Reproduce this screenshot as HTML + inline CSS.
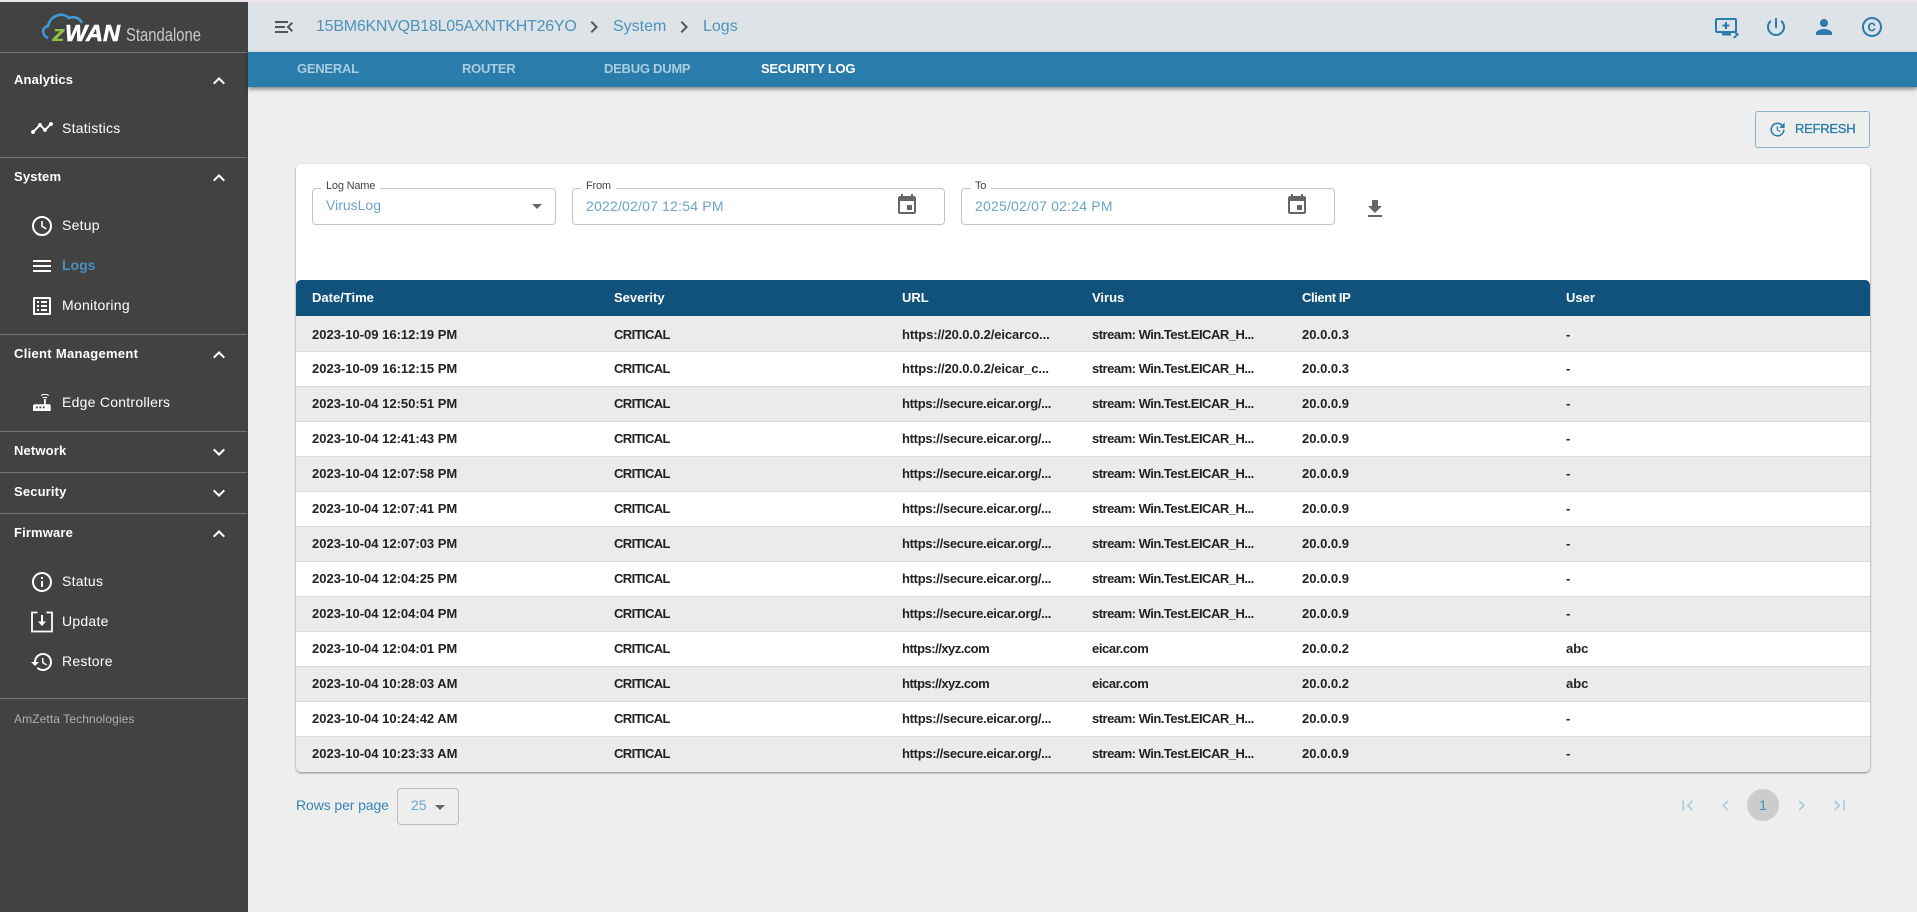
<!DOCTYPE html>
<html lang="en"><head><meta charset="utf-8"><title>zWAN Standalone</title>
<style>
html,body{margin:0;padding:0;width:1917px;height:912px;overflow:hidden;background:#eee;font-family:"Liberation Sans",Arial,sans-serif}
*{box-sizing:border-box}
.a{position:absolute;white-space:nowrap}
svg{position:absolute;display:block;overflow:visible}
#top{position:absolute;left:0;top:0;width:1917px;height:2px;background:#ece4ea}
#side{position:absolute;left:0;top:2px;width:248px;height:910px;background:#424242}
.sep{position:absolute;left:0;width:247px;height:1px;background:#757575}
.h{position:absolute;left:14px;font-size:13px;font-weight:bold;color:#fff;line-height:16px;letter-spacing:.15px;white-space:nowrap}
.i{position:absolute;left:62px;font-size:14px;color:#fff;line-height:18px;letter-spacing:.25px;white-space:nowrap}
#hdr{position:absolute;left:248px;top:2px;width:1669px;height:50px;background:#dee3e7}
#tabs{position:absolute;left:248px;top:52px;width:1669px;height:35px;background:#2a7cab;box-shadow:0 2px 4px rgba(0,0,0,.45)}
.t{position:absolute;top:61px;font-size:13px;font-weight:bold;line-height:16px;color:#a9cde0;letter-spacing:-.25px;white-space:nowrap}
.bc{position:absolute;top:17px;font-size:16px;line-height:20px;color:#4c92bb;white-space:nowrap}
#btn{position:absolute;left:1755px;top:111px;width:115px;height:37px;border:1px solid #86b3cd;border-radius:3px}
#card{position:absolute;left:296px;top:164px;width:1574px;height:608px;background:#fff;border-radius:5px;box-shadow:0 1px 2px rgba(0,0,0,.45);overflow:hidden}
.f{position:absolute;top:188px;height:37px;border:1px solid #c4c4c4;border-radius:4px;background:#fff}
.l{position:absolute;top:180px;height:13px;background:#fff;padding:0 5px;font-size:11px;line-height:13px;color:#444;letter-spacing:-.2px;white-space:nowrap}
.v{position:absolute;font-size:14px;line-height:18px;color:#6aa5c9;white-space:nowrap}
.d{letter-spacing:.2px}
#th{position:absolute;left:296px;top:280px;width:1574px;height:36px;background:#10527c;border-radius:5px 5px 0 0}
.tx{position:absolute;top:0;line-height:36px;font-size:13px;font-weight:bold;color:#fff;white-space:nowrap}
.r{position:absolute;left:296px;width:1574px;height:35px;border-bottom:1px solid #dcdcdc;background:#fff;overflow:hidden}
.r.g{background:#ebebeb}
.r span{position:absolute;top:-1px;line-height:35px;font-size:13px;font-weight:bold;color:#222;white-space:nowrap}
.c1{left:16px}.c2{left:318px;letter-spacing:-.6px}.c3{left:606px;letter-spacing:-.3px}.c4{left:796px;letter-spacing:-.5px}.c5{left:1006px}.c6{left:1270px}
.r span.x{letter-spacing:-.5px}.r span.y{letter-spacing:-.4px}.r span.z{letter-spacing:-.1px}
</style></head><body>
<div id="top"></div>
<div id="side"></div>

<svg style="left:40px;top:10px" width="170" height="36" viewBox="0 0 170 36">
<path d="M8 28C1 25 2 17 8 16 C10 6 22 1 29 8 C34 6 40 8 42 13" fill="none" stroke="#3c9ad6" stroke-width="2.6"/>
<text x="12" y="31" font-family="Liberation Sans" font-size="22" font-weight="bold" font-style="italic" fill="#8dc044" textLength="13" lengthAdjust="spacingAndGlyphs">z</text>
<text x="25" y="31" font-family="Liberation Sans" font-size="23" font-weight="bold" font-style="italic" fill="#fff" stroke="#fff" stroke-width=".6" textLength="55" lengthAdjust="spacingAndGlyphs">WAN</text>
<text x="86" y="31" font-family="Liberation Sans" font-size="18" fill="#c8c8c8" textLength="75" lengthAdjust="spacingAndGlyphs">Standalone</text>
</svg>

<div class="sep" style="top:52px"></div>
<div class="h" style="top:72px">Analytics</div>
<svg style="left:207px;top:69px" width="24" height="24" viewBox="0 0 24 24" fill="#fff"><path d="M12 8l-6 6 1.41 1.41L12 10.83l4.59 4.58L18 14z"/></svg>
<svg style="left:30px;top:116px" width="24" height="24" viewBox="0 0 24 24" fill="#fff"><path d="M23 8c0 1.1-.9 2-2 2-.18 0-.35-.02-.51-.07l-3.56 3.55c.05.16.07.34.07.52 0 1.1-.9 2-2 2s-2-.9-2-2c0-.18.02-.36.07-.52l-2.55-2.55c-.16.05-.34.07-.52.07s-.36-.02-.52-.07l-4.55 4.56c.05.16.07.33.07.51 0 1.1-.9 2-2 2s-2-.9-2-2 .9-2 2-2c.18 0 .35.02.51.07l4.56-4.55C8.02 9.36 8 9.18 8 9c0-1.1.9-2 2-2s2 .9 2 2c0 .18-.02.36-.07.52l2.55 2.55c.16-.05.34-.07.52-.07s.36.02.52.07l3.55-3.56C19.02 8.35 19 8.18 19 8c0-1.1.9-2 2-2s2 .9 2 2z"/></svg>
<div class="i" style="top:119px">Statistics</div>
<div class="sep" style="top:157px"></div>
<div class="h" style="top:169px">System</div>
<svg style="left:207px;top:166px" width="24" height="24" viewBox="0 0 24 24" fill="#fff"><path d="M12 8l-6 6 1.41 1.41L12 10.83l4.59 4.58L18 14z"/></svg>
<svg style="left:30px;top:214px" width="24" height="24" viewBox="0 0 24 24" fill="none" stroke="#fff" stroke-width="2"><circle cx="12" cy="12" r="9"/><path d="M12 7v5.3l4.2 2.5" stroke-width="1.6"/></svg>
<div class="i" style="top:216px">Setup</div>
<svg style="left:30px;top:254px" width="24" height="24" viewBox="0 0 24 24" fill="#fff"><path d="M3 18h18v-2H3v2zm0-5h18v-2H3v2zm0-7v2h18V6H3z"/></svg>
<div class="i" style="top:256px;color:#4a90bf;font-weight:bold;letter-spacing:0">Logs</div>
<svg style="left:30px;top:294px" width="24" height="24" viewBox="0 0 24 24" fill="#fff"><path d="M19 5v14H5V5h14m1.1-2H3.9c-.5 0-.9.4-.9.9v16.2c0 .4.4.9.9.9h16.2c.4 0 .9-.5.9-.9V3.9c0-.5-.5-.9-.9-.9zM11 7h6v2h-6V7zm0 4h6v2h-6v-2zm0 4h6v2h-6zM7 7h2v2H7zm0 4h2v2H7zm0 4h2v2H7z"/></svg>
<div class="i" style="top:296px">Monitoring</div>
<div class="sep" style="top:334px"></div>
<div class="h" style="top:346px;letter-spacing:.3px">Client Management</div>
<svg style="left:207px;top:343px" width="24" height="24" viewBox="0 0 24 24" fill="#fff"><path d="M12 8l-6 6 1.41 1.41L12 10.83l4.59 4.58L18 14z"/></svg>
<svg style="left:30px;top:391px" width="24" height="24" viewBox="0 0 24 24"><path d="M3 20v-5c0-1 .8-1.700 1.700-1.700H19c1 0 1.700.8 1.700 1.700v5z" fill="#fff"/><rect x="14" y="8" width="1.800" height="6" fill="#fff"/><rect x="6" y="15.500" width="1.800" height="1.800" fill="#424242"/><rect x="9.400" y="15.500" width="1.800" height="1.800" fill="#424242"/><rect x="12.800" y="15.500" width="1.800" height="1.800" fill="#424242"/><path d="M11 4.500c2-1.500 5.800-1.500 7.800 0M12.700 7c1.200-.8 3.200-.8 4.400 0" fill="none" stroke="#fff" stroke-width="1.100"/></svg>
<div class="i" style="top:393px">Edge Controllers</div>
<div class="sep" style="top:431px"></div>
<div class="h" style="top:443px">Network</div>
<svg style="left:207px;top:440px" width="24" height="24" viewBox="0 0 24 24" fill="#fff"><path d="M16.59 8.59L12 13.17 7.41 8.59 6 10l6 6 6-6z"/></svg>
<div class="sep" style="top:472px"></div>
<div class="h" style="top:484px">Security</div>
<svg style="left:207px;top:481px" width="24" height="24" viewBox="0 0 24 24" fill="#fff"><path d="M16.59 8.59L12 13.17 7.41 8.59 6 10l6 6 6-6z"/></svg>
<div class="sep" style="top:513px"></div>
<div class="h" style="top:525px">Firmware</div>
<svg style="left:207px;top:522px" width="24" height="24" viewBox="0 0 24 24" fill="#fff"><path d="M12 8l-6 6 1.41 1.41L12 10.83l4.59 4.58L18 14z"/></svg>
<svg style="left:30px;top:570px" width="24" height="24" viewBox="0 0 24 24" fill="#fff"><path d="M11 7h2v2h-2zm0 4h2v6h-2zm1-9C6.480 2 2 6.480 2 12s4.480 10 10 10 10-4.480 10-10S17.520 2 12 2zm0 18c-4.410 0-8-3.590-8-8s3.590-8 8-8 8 3.590 8 8-3.590 8-8 8z"/></svg>
<div class="i" style="top:572px">Status</div>
<svg style="left:30px;top:610px" width="24" height="24" viewBox="0 0 24 24" fill="none" stroke="#fff" stroke-width="1.800"><path d="M7.500 2.500H2v19h20v-19h-5.500"/><path d="M12 5v9" stroke-width="2"/><path d="M8 11.500h8L12 16z" fill="#fff" stroke="none"/></svg>
<div class="i" style="top:612px">Update</div>
<svg style="left:30px;top:650px" width="24" height="24" viewBox="0 0 24 24" fill="#fff"><path d="M13 3c-4.970 0-9 4.030-9 9H1l3.890 3.890.07.14L9 12H6c0-3.870 3.130-7 7-7s7 3.130 7 7-3.130 7-7 7c-1.930 0-3.680-.79-4.940-2.060l-1.420 1.420C8.270 19.990 10.510 21 13 21c4.970 0 9-4.030 9-9s-4.030-9-9-9zm-1 5v5l4.280 2.540.72-1.210-3.500-2.080V8H12z"/></svg>
<div class="i" style="top:652px">Restore</div>
<div class="sep" style="top:698px"></div>
<div class="a" style="left:14px;top:712px;font-size:12px;line-height:15px;color:#b0b0b0;letter-spacing:.1px">AmZetta Technologies</div>

<div id="hdr"></div>
<svg style="left:272px;top:15px" width="24" height="24" viewBox="0 0 24 24" fill="#555"><path d="M3 18h13v-2H3v2zm0-5h10v-2H3v2zm0-7v2h13V6H3zm18 9.590L17.420 12 21 8.410 19.590 7l-5 5 5 5L21 15.590z"/></svg>
<div class="bc" style="left:316px;letter-spacing:-.24px">15BM6KNVQB18L05AXNTKHT26YO</div>
<svg style="left:582px;top:15px" width="24" height="24" viewBox="0 0 24 24" fill="#555"><path d="M10 6L8.590 7.410 13.170 12l-4.580 4.590L10 18l6-6z"/></svg>
<div class="bc" style="left:613px">System</div>
<svg style="left:672px;top:15px" width="24" height="24" viewBox="0 0 24 24" fill="#555"><path d="M10 6L8.590 7.410 13.170 12l-4.580 4.590L10 18l6-6z"/></svg>
<div class="bc" style="left:703px">Logs</div>

<svg style="left:1715px;top:18px" width="25" height="20" viewBox="0 0 25 20" fill="#2a7cab"><path d="M2 0h18c1 0 2 1 2 2v11c0 1-1 2-2 2H2c-1 0-2-1-2-2V2C0 1 1 0 2 0zm0 2v11h18V2z"/><path d="M10 4h2v2.500h2.500v2H12V11h-2V8.500H7.500v-2H10z"/><rect x="7" y="15" width="9" height="2.500"/><path d="M18 13.500l1.500-1 4.500 4-4.500 4-1.500-1 3-3z"/></svg>
<svg style="left:1764px;top:15px" width="24" height="24" viewBox="0 0 24 24" fill="#2a7cab"><path d="M13 3h-2v10h2V3zm4.830 2.170l-1.420 1.420C17.990 7.860 19 9.810 19 12c0 3.870-3.130 7-7 7s-7-3.130-7-7c0-2.190 1.010-4.140 2.580-5.420L6.170 5.170C4.230 6.820 3 9.260 3 12c0 4.970 4.030 9 9 9s9-4.030 9-9c0-2.740-1.230-5.180-3.170-6.830z"/></svg>
<svg style="left:1812px;top:15px" width="24" height="24" viewBox="0 0 24 24" fill="#2a7cab"><path d="M12 12c2.210 0 4-1.790 4-4s-1.790-4-4-4-4 1.790-4 4 1.790 4 4 4zm0 2c-2.670 0-8 1.340-8 4v2h16v-2c0-2.660-5.330-4-8-4z"/></svg>
<svg style="left:1860px;top:15px" width="24" height="24" viewBox="0 0 24 24" fill="#2a7cab"><path d="M10.080 10.860c.05-.33.16-.62.3-.87s.34-.46.59-.62c.24-.15.54-.22.91-.23.23.01.44.05.63.13.2.09.38.21.52.36s.25.33.34.53.13.42.14.64h1.790c-.02-.47-.11-.9-.28-1.290s-.4-.73-.7-1.010-.66-.5-1.080-.66-.88-.23-1.390-.23c-.65 0-1.220.11-1.700.34s-.88.53-1.200.92-.56.84-.71 1.360S8 11.290 8 11.870v.27c0 .58.08 1.120.23 1.640s.39.97.71 1.350.72.69 1.200.91c.48.22 1.050.34 1.700.34.47 0 .91-.08 1.320-.23s.77-.36 1.080-.63.56-.58.74-.94.29-.74.3-1.150h-1.790c-.01.21-.06.4-.15.58s-.21.33-.36.46-.32.23-.52.3c-.19.07-.39.09-.6.1-.36-.01-.66-.08-.89-.23-.25-.16-.45-.37-.59-.62s-.25-.55-.3-.88-.08-.67-.08-1v-.27c0-.35.03-.68.08-1.010zM12 2C6.480 2 2 6.480 2 12s4.480 10 10 10 10-4.480 10-10S17.520 2 12 2zm0 18c-4.410 0-8-3.590-8-8s3.590-8 8-8 8 3.590 8 8-3.590 8-8 8z"/></svg>

<div id="tabs"></div>
<div class="t" style="left:297px">GENERAL</div>
<div class="t" style="left:462px">ROUTER</div>
<div class="t" style="left:604px">DEBUG DUMP</div>
<div class="t" style="left:761px;color:#fff">SECURITY LOG</div>

<div id="btn"></div>
<svg style="left:1768px;top:120px" width="19" height="19" viewBox="0 0 24 24" fill="#2a7cab"><path d="M21 10.120h-6.780l2.740-2.820c-2.730-2.700-7.150-2.800-9.880-.1-2.730 2.710-2.730 7.080 0 9.790s7.150 2.710 9.880 0C18.320 15.650 19 14.080 19 12.100h2c0 1.980-.88 4.550-2.640 6.290-3.510 3.480-9.210 3.480-12.720 0-3.500-3.470-3.530-9.110-.02-12.580s9.140-3.470 12.650 0L21 3v7.120zM12.500 8v4.250l3.500 2.080-.72 1.210L11 13V8h1.500z"/></svg>
<div class="a" style="left:1795px;top:120px;font-size:13px;line-height:18px;color:#2a7cab;letter-spacing:-.25px;-webkit-text-stroke:.3px #2a7cab">REFRESH</div>

<div id="card"></div>
<div class="f" style="left:312px;width:244px"></div>
<div class="l" style="left:321px">Log Name</div>
<div class="v" style="left:326px;top:196px">VirusLog</div>
<svg style="left:532px;top:204px" width="10" height="5" viewBox="0 0 10 5" fill="#666"><path d="M0 0h10L5 5z"/></svg>
<div class="f" style="left:572px;width:373px"></div>
<div class="l" style="left:581px">From</div>
<div class="v d" style="left:586px;top:197px">2022/02/07 12:54 PM</div>
<svg style="left:895px;top:193px" width="24" height="24" viewBox="0 0 24 24" fill="#666"><path d="M17 12h-5v5h5v-5zM16 1v2H8V1H6v2H5c-1.110 0-1.990.9-1.990 2L3 19c0 1.100.89 2 2 2h14c1.100 0 2-.9 2-2V5c0-1.100-.89-2-2-2h-1V1h-2zm3 18H5V8h14v11z"/></svg>
<div class="f" style="left:961px;width:374px"></div>
<div class="l" style="left:970px">To</div>
<div class="v d" style="left:975px;top:197px">2025/02/07 02:24 PM</div>
<svg style="left:1285px;top:193px" width="24" height="24" viewBox="0 0 24 24" fill="#666"><path d="M17 12h-5v5h5v-5zM16 1v2H8V1H6v2H5c-1.110 0-1.990.9-1.990 2L3 19c0 1.100.89 2 2 2h14c1.100 0 2-.9 2-2V5c0-1.100-.89-2-2-2h-1V1h-2zm3 18H5V8h14v11z"/></svg>
<svg style="left:1363px;top:197px" width="24" height="24" viewBox="0 0 24 24" fill="#666"><path d="M19 9h-4V3H9v6H5l7 7 7-7zM5 18v2h14v-2H5z"/></svg>

<div id="th">
<div class="tx" style="left:16px">Date/Time</div><div class="tx" style="left:318px">Severity</div><div class="tx" style="left:606px">URL</div><div class="tx" style="left:796px">Virus</div><div class="tx" style="left:1006px;letter-spacing:-.4px">Client IP</div><div class="tx" style="left:1270px">User</div>
</div>

<div class="r g" style="top:316px;height:36px"><span class="c1" style="top:1px">2023-10-09 16:12:19 PM</span><span class="c2" style="top:1px">CRITICAL</span><span class="c3 z" style="top:1px">https://20.0.0.2/eicarco...</span><span class="c4" style="top:1px">stream: Win.Test.EICAR_H...</span><span class="c5" style="top:1px">20.0.0.3</span><span class="c6" style="top:1px">-</span></div>
<div class="r" style="top:352px"><span class="c1">2023-10-09 16:12:15 PM</span><span class="c2">CRITICAL</span><span class="c3 z">https://20.0.0.2/eicar_c...</span><span class="c4">stream: Win.Test.EICAR_H...</span><span class="c5">20.0.0.3</span><span class="c6">-</span></div>
<div class="r g" style="top:387px"><span class="c1">2023-10-04 12:50:51 PM</span><span class="c2">CRITICAL</span><span class="c3">https://secure.eicar.org/...</span><span class="c4">stream: Win.Test.EICAR_H...</span><span class="c5">20.0.0.9</span><span class="c6">-</span></div>
<div class="r" style="top:422px"><span class="c1">2023-10-04 12:41:43 PM</span><span class="c2">CRITICAL</span><span class="c3">https://secure.eicar.org/...</span><span class="c4">stream: Win.Test.EICAR_H...</span><span class="c5">20.0.0.9</span><span class="c6">-</span></div>
<div class="r g" style="top:457px"><span class="c1">2023-10-04 12:07:58 PM</span><span class="c2">CRITICAL</span><span class="c3">https://secure.eicar.org/...</span><span class="c4">stream: Win.Test.EICAR_H...</span><span class="c5">20.0.0.9</span><span class="c6">-</span></div>
<div class="r" style="top:492px"><span class="c1">2023-10-04 12:07:41 PM</span><span class="c2">CRITICAL</span><span class="c3">https://secure.eicar.org/...</span><span class="c4">stream: Win.Test.EICAR_H...</span><span class="c5">20.0.0.9</span><span class="c6">-</span></div>
<div class="r g" style="top:527px"><span class="c1">2023-10-04 12:07:03 PM</span><span class="c2">CRITICAL</span><span class="c3">https://secure.eicar.org/...</span><span class="c4">stream: Win.Test.EICAR_H...</span><span class="c5">20.0.0.9</span><span class="c6">-</span></div>
<div class="r" style="top:562px"><span class="c1">2023-10-04 12:04:25 PM</span><span class="c2">CRITICAL</span><span class="c3">https://secure.eicar.org/...</span><span class="c4">stream: Win.Test.EICAR_H...</span><span class="c5">20.0.0.9</span><span class="c6">-</span></div>
<div class="r g" style="top:597px"><span class="c1">2023-10-04 12:04:04 PM</span><span class="c2">CRITICAL</span><span class="c3">https://secure.eicar.org/...</span><span class="c4">stream: Win.Test.EICAR_H...</span><span class="c5">20.0.0.9</span><span class="c6">-</span></div>
<div class="r" style="top:632px"><span class="c1">2023-10-04 12:04:01 PM</span><span class="c2">CRITICAL</span><span class="c3 x">https://xyz.com</span><span class="c4 y">eicar.com</span><span class="c5">20.0.0.2</span><span class="c6">abc</span></div>
<div class="r g" style="top:667px"><span class="c1">2023-10-04 10:28:03 AM</span><span class="c2">CRITICAL</span><span class="c3 x">https://xyz.com</span><span class="c4 y">eicar.com</span><span class="c5">20.0.0.2</span><span class="c6">abc</span></div>
<div class="r" style="top:702px"><span class="c1">2023-10-04 10:24:42 AM</span><span class="c2">CRITICAL</span><span class="c3">https://secure.eicar.org/...</span><span class="c4">stream: Win.Test.EICAR_H...</span><span class="c5">20.0.0.9</span><span class="c6">-</span></div>
<div class="r g" style="top:737px;border-bottom:0;border-radius:0 0 5px 5px"><span class="c1">2023-10-04 10:23:33 AM</span><span class="c2">CRITICAL</span><span class="c3">https://secure.eicar.org/...</span><span class="c4">stream: Win.Test.EICAR_H...</span><span class="c5">20.0.0.9</span><span class="c6">-</span></div>

<div class="a" style="left:296px;top:796px;font-size:14px;line-height:18px;color:#3585b4;letter-spacing:-.1px">Rows per page</div>
<div class="a" style="left:397px;top:788px;width:62px;height:37px;border:1px solid #bdbdbd;border-radius:4px"></div>
<div class="a" style="left:411px;top:796px;font-size:14px;line-height:18px;color:#6aa5c9">25</div>
<svg style="left:435px;top:805px" width="10" height="5" viewBox="0 0 10 5" fill="#666"><path d="M0 0h10L5 5z"/></svg>

<svg style="left:1676.500px;top:794.500px" width="21" height="21" viewBox="0 0 24 24" fill="#a9cde0"><path d="M18.410 16.590L13.820 12l4.590-4.590L17 6l-6 6 6 6zM6 6h2v12H6z"/></svg>
<svg style="left:1714.500px;top:794.500px" width="21" height="21" viewBox="0 0 24 24" fill="#a9cde0"><path d="M15.410 7.410L14 6l-6 6 6 6 1.410-1.410L10.830 12z"/></svg>
<div class="a" style="left:1747px;top:789px;width:32px;height:32px;border-radius:50%;background:#ccc;text-align:center;font-size:14px;line-height:32px;color:#3f8fbd">1</div>
<svg style="left:1790.500px;top:794.500px" width="21" height="21" viewBox="0 0 24 24" fill="#a9cde0"><path d="M10 6L8.590 7.410 13.170 12l-4.580 4.590L10 18l6-6z"/></svg>
<svg style="left:1828.500px;top:794.500px" width="21" height="21" viewBox="0 0 24 24" fill="#a9cde0"><path d="M5.590 7.410L10.180 12l-4.590 4.590L7 18l6-6-6-6zM16 6h2v12h-2z"/></svg>
</body></html>
